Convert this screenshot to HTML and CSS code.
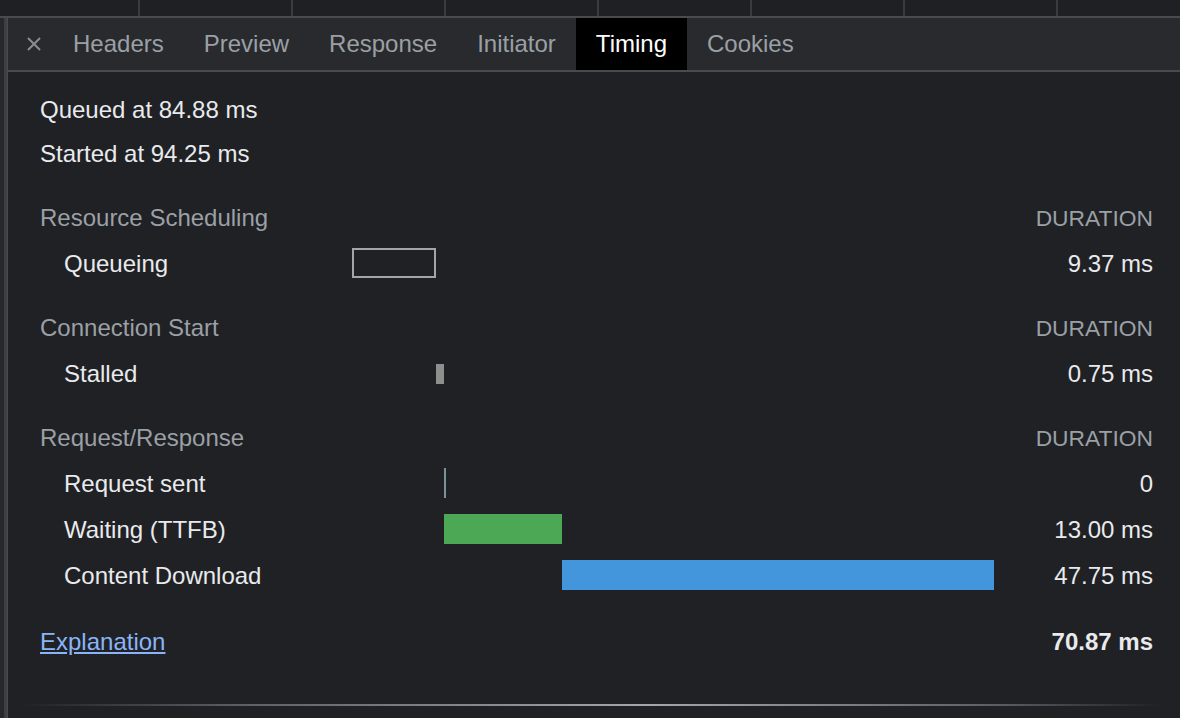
FILE: index.html
```html
<!DOCTYPE html>
<html>
<head>
<meta charset="utf-8">
<link rel="stylesheet" href="styles.css">
</head>
<body>
<div class="top-strip">
  <div class="cell first"></div>
  <div class="cell"></div>
  <div class="cell"></div>
  <div class="cell"></div>
  <div class="cell"></div>
  <div class="cell"></div>
  <div class="cell"></div>
  <div class="cell last"></div>
</div>
<div class="main">
  <div class="side"></div>
  <div class="panel">
    <div class="tabs">
      <div class="close">
        <svg width="14" height="14" viewBox="0 0 14 14"><path d="M1 1 L13 13 M13 1 L1 13" stroke="#8a8d91" stroke-width="2" fill="none"/></svg>
      </div>
      <div class="tab">Headers</div>
      <div class="tab">Preview</div>
      <div class="tab">Response</div>
      <div class="tab">Initiator</div>
      <div class="tab active">Timing</div>
      <div class="tab">Cookies</div>
    </div>
    <div class="content">
      <div class="summary">Queued at 84.88 ms</div>
      <div class="summary">Started at 94.25 ms</div>

      <div class="grid first-section">
        <div class="sec-label">Resource Scheduling</div>
        <div class="bar-cell"></div>
        <div class="sec-dur">DURATION</div>

        <div class="row-label">Queueing</div>
        <div class="bar-cell"><div class="bar queue" style="margin-left:0px;width:84px"></div></div>
        <div class="dur">9.37 ms</div>
      </div>

      <div class="grid section">
        <div class="sec-label">Connection Start</div>
        <div class="bar-cell"></div>
        <div class="sec-dur">DURATION</div>

        <div class="row-label">Stalled</div>
        <div class="bar-cell"><div class="bar stalled" style="margin-left:84px;width:8px"></div></div>
        <div class="dur">0.75 ms</div>
      </div>

      <div class="grid section">
        <div class="sec-label">Request/Response</div>
        <div class="bar-cell"></div>
        <div class="sec-dur">DURATION</div>

        <div class="row-label">Request sent</div>
        <div class="bar-cell"><div class="bar sent" style="margin-left:92px;width:2px"></div></div>
        <div class="dur">0</div>

        <div class="row-label">Waiting (TTFB)</div>
        <div class="bar-cell"><div class="bar waiting" style="margin-left:92px;width:118px"></div></div>
        <div class="dur">13.00 ms</div>

        <div class="row-label">Content Download</div>
        <div class="bar-cell"><div class="bar download" style="margin-left:210px;width:432px"></div></div>
        <div class="dur">47.75 ms</div>
      </div>

      <div class="footer">
        <a class="explain" href="#">Explanation</a>
        <div class="total">70.87 ms</div>
      </div>
    </div>
    <div class="fade-line"></div>
  </div>
</div>
</body>
</html>
```

FILE: styles.css
```css
html, body {
  margin: 0;
  padding: 0;
}
body {
  width: 1180px;
  height: 718px;
  overflow: hidden;
  background: #202124;
  font-family: "Liberation Sans", Arial, sans-serif;
  color: #e8eaed;
}
.top-strip {
  display: flex;
  height: 16px;
  border-bottom: 2px solid #494b4f;
  background: #1f2023;
}
.cell {
  width: 151px;
  border-right: 2px solid #3a3b3e;
  flex: none;
}
.cell.first {
  width: 138px;
}
.cell.last {
  flex: 1;
  border-right: none;
}
.main {
  display: flex;
  height: 700px;
}
.side {
  width: 7px;
  flex: none;
  background: linear-gradient(to right, #27282a 0 4px, #3e3f42 4px 7px);
}
.panel {
  flex: 1;
  border-left: 1px solid #4a4b4e;
  display: flex;
  flex-direction: column;
}
.tabs {
  display: flex;
  height: 52px;
  background: #292a2d;
  border-bottom: 2px solid #4a4b4e;
}
.close {
  width: 39px;
  margin-left: 6px;
  display: flex;
  align-items: center;
  justify-content: center;
}
.close svg {
  display: block;
}
.tab {
  padding: 0 20px;
  font-size: 24px;
  line-height: 52px;
  color: #9aa0a6;
  white-space: nowrap;
}
.tab.active {
  background: #000;
  color: #ffffff;
}
.content {
  padding: 16px 27px 0 32px;
}
.summary {
  font-size: 24px;
  line-height: 44px;
  color: #e8eaed;
}
.grid {
  display: grid;
  grid-template-columns: 312px 642px 1fr;
  grid-auto-rows: 46px;
  font-size: 24px;
  align-items: center;
}
.first-section {
  margin-top: 19px;
}
.section {
  margin-top: 18px;
}
.sec-label {
  color: #9aa0a6;
  white-space: nowrap;
}
.sec-dur {
  color: #9aa0a6;
  text-align: right;
  font-size: 22.8px;
}
.row-label {
  padding-left: 24px;
  color: #e8eaed;
  white-space: nowrap;
}
.dur {
  text-align: right;
  color: #e8eaed;
  white-space: nowrap;
}
.bar-cell {
  height: 46px;
  display: flex;
  align-items: center;
}
.bar {
  height: 30px;
  flex: none;
  margin-top: -2px;
  box-sizing: border-box;
}
.bar.queue {
  border: 2px solid #a2a6aa;
}
.bar.stalled {
  height: 20px;
  margin-top: 0;
  background: #8e8e8e;
}
.bar.sent {
  background: #7a9398;
}
.bar.waiting {
  background: #4ca854;
}
.bar.download {
  background: #4396db;
}
.footer {
  margin-top: 20px;
  height: 46px;
  display: flex;
  align-items: center;
  justify-content: space-between;
  font-size: 24px;
}
.explain {
  color: #8ab4f8;
  text-decoration: underline;
}
.total {
  font-weight: bold;
  color: #e8eaed;
}
.fade-line {
  margin: 39px 20px 0 12px;
  height: 2px;
  background: linear-gradient(to right, rgba(154,160,166,0) 0%, rgba(154,160,166,0.5) 20%, #a4a8ad 55%, rgba(154,160,166,0.5) 85%, rgba(154,160,166,0) 100%);
}
```
